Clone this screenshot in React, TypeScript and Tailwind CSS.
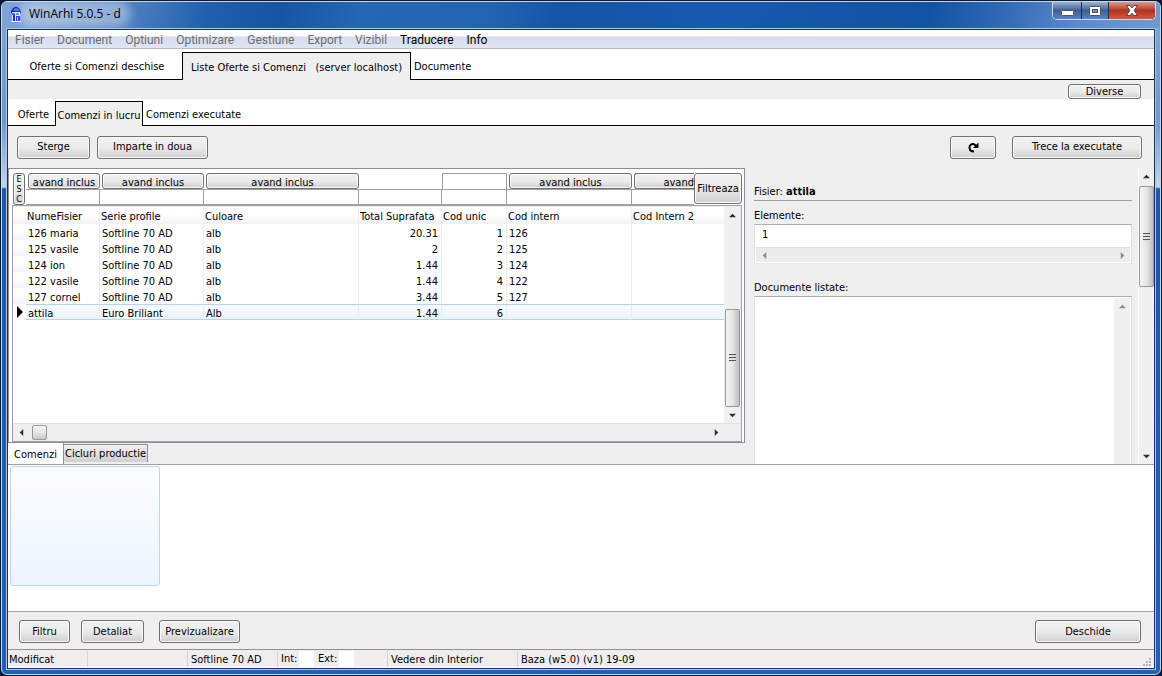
import type { ReactNode } from "react";
import clsx from "clsx";

const buttonClass =
  "rounded-[3px] border border-[#707070] bg-linear-to-b from-[#f2f2f2] via-[#ebebeb] via-50% to-[#cfcfcf] text-center whitespace-nowrap shadow-[inset_0_0_0_1px_#fafafa]";

const menus = [
  { label: "Fisier", enabled: false },
  { label: "Document", enabled: false },
  { label: "Optiuni", enabled: false },
  { label: "Optimizare", enabled: false },
  { label: "Gestiune", enabled: false },
  { label: "Export", enabled: false },
  { label: "Vizibil", enabled: false },
  { label: "Traducere", enabled: true },
  { label: "Info", enabled: true },
];

const orders = [
  { name: "126 maria", series: "Softline 70 AD", color: "alb", area: "20.31", id: 1, code: "126" },
  { name: "125 vasile", series: "Softline 70 AD", color: "alb", area: "2", id: 2, code: "125" },
  { name: "124 ion", series: "Softline 70 AD", color: "alb", area: "1.44", id: 3, code: "124" },
  { name: "122 vasile", series: "Softline 70 AD", color: "alb", area: "1.44", id: 4, code: "122" },
  { name: "127 cornel", series: "Softline 70 AD", color: "alb", area: "3.44", id: 5, code: "127" },
  { name: "attila", series: "Euro Briliant", color: "Alb", area: "1.44", id: 6, code: "" },
];

const filters = [
  { field: "NumeFisier", width: "w-[74px]", mode: true },
  { field: "Serie profile", width: "w-[104px]", mode: true },
  { field: "Culoare", width: "w-[155px]", mode: true },
  { field: "Total Suprafata", width: "w-[83px]", mode: false },
  { field: "Cod unic", width: "w-[65px]", mode: false },
  { field: "Cod intern", width: "w-[125px]", mode: true },
];

type Direction = "up" | "down" | "left" | "right";

const arrowPaths: Record<Direction, string> = {
  up: "M0 6 L4 2 L8 6 Z",
  down: "M0 2 L4 6 L8 2 Z",
  left: "M6 0 L2 4 L6 8 Z",
  right: "M2 0 L6 4 L2 8 Z",
};

function ArrowButton({ direction, label, faded }: { direction: Direction; label: string; faded?: boolean }) {
  return (
    <button type="button" aria-label={label} className="flex size-4 shrink-0 items-center justify-center">
      <svg viewBox="0 0 8 8" className={clsx("size-[7px]", faded ? "fill-[#8a8a8a]" : "fill-[#303030]")} aria-hidden>
        <path d={arrowPaths[direction]} />
      </svg>
    </button>
  );
}

function Grip() {
  return (
    <span className="flex flex-col gap-px" aria-hidden>
      <span className="h-0.5 w-[7px] border-t border-[#555] bg-[#ddd]" />
      <span className="h-0.5 w-[7px] border-t border-[#555] bg-[#ddd]" />
      <span className="h-0.5 w-[7px] border-t border-[#555] bg-[#ddd]" />
    </span>
  );
}

function VerticalThumb({ className }: { className: string }) {
  return (
    <div
      className={clsx(
        "flex w-[15px] shrink-0 items-center justify-center rounded-[2px] border border-[#979797] bg-linear-to-r from-[#f5f5f5] via-[#e6e6e6] via-50% to-[#bfbfc3]",
        className,
      )}
    >
      <Grip />
    </div>
  );
}

function AppIcon() {
  return (
    <svg viewBox="0 0 10 15" className="h-[15px] w-2.5" aria-hidden>
      <path d="M0 4 L1 3 L2 1 L4 0 H6 L8 1 L9 3 L10 4 V6 H0 Z" fill="#0b12e0" />
      <path d="M2 3 L4 1 H6 L8 3 V4 H2 Z" fill="#3f6dff" />
      <rect x="1" y="5" width="8" height="9" fill="#dfe8ff" />
      <rect x="1" y="6" width="3" height="2" fill="#3a5cff" />
      <rect x="2" y="8" width="2" height="6" fill="#1420ff" />
      <rect x="5" y="6" width="3" height="2" fill="#5a86ff" />
      <rect x="5" y="9" width="4" height="5" fill="#1a2cf0" />
      <rect x="6" y="10" width="1" height="4" fill="#9db4ff" />
      <rect x="0" y="14" width="10" height="1" fill="#fff" />
    </svg>
  );
}

function WindowControls() {
  return (
    <div className="flex h-[18px] overflow-hidden rounded-b-[5px] border border-t-0 border-[#cfdcef] bg-[#14305c]">
      <button
        type="button"
        aria-label="Minimize"
        className="mr-px flex w-7 items-center justify-center bg-linear-to-b from-[#9fb4d4] via-[#3e608f] via-50% to-[#5b84bd]"
      >
        <svg viewBox="0 0 13 6" className="mt-1 h-1.5 w-[13px]" aria-hidden>
          <rect x="0.5" y="0.5" width="12" height="5" rx="1" fill="#fff" stroke="#4b5263" />
        </svg>
      </button>
      <button
        type="button"
        aria-label="Maximize"
        className="mr-px flex w-[26px] items-center justify-center bg-linear-to-b from-[#9fb4d4] via-[#3e608f] via-50% to-[#5b84bd]"
      >
        <svg viewBox="0 0 12 10" className="h-2.5 w-3" aria-hidden>
          <rect x="0.5" y="0.5" width="11" height="9" rx="1" fill="#fff" stroke="#4b5263" />
          <rect x="3.5" y="3.5" width="5" height="3" fill="#6f8fbd" stroke="#4b5263" />
        </svg>
      </button>
      <button
        type="button"
        aria-label="Close"
        className="flex w-[46px] items-center justify-center bg-linear-to-b from-[#dc9a8e] via-[#b5301a] via-50% to-[#cf5a40]"
      >
        <svg viewBox="0 0 12 11" className="h-[11px] w-3" aria-hidden>
          <path
            d="M0.5 0.5 H4 L6 2.8 L8 0.5 H11.5 L8.2 5.5 L11.5 10.5 H8 L6 8.2 L4 10.5 H0.5 L3.8 5.5 Z"
            fill="#fff"
            stroke="#50404e"
          />
        </svg>
      </button>
    </div>
  );
}

function TitleBar() {
  return (
    <header className="flex h-[26px] shrink-0 items-start justify-between bg-[linear-gradient(100deg,#7ea6d6_0%,#6d97cd_5%,#4f80c0_11%,#1f5fae_18%,#1555a4_24%,#2667b5_31%,#2364b2_42%,#1555a6_48%,#1659b0_62%,#1353a3_80%,#2f68b5_86%,#5d8bc9_93%,#7199cf_100%)] pr-1 pl-[9px]">
      <div className="flex h-6 items-center gap-1">
        <AppIcon />
        <h1 className="rounded-full bg-white/35 px-1 font-[Open_Sans,Noto_Sans,sans-serif] text-xs leading-4 shadow-[0_0_8px_6px_rgba(255,255,255,0.35)]">
          WinArhi 5.0.5 - d
        </h1>
      </div>
      <WindowControls />
    </header>
  );
}

function MenuBar() {
  return (
    <nav
      aria-label="Meniu"
      className="flex h-[19px] shrink-0 items-center gap-[13px] border-b border-[#b6bccc] bg-linear-to-b from-white from-30% via-[#d5dcee] via-40% to-[#e1e6f6] pt-0.5 pl-[7px] font-[Roboto,Open_Sans,sans-serif] text-xs"
    >
      {menus.map((menu) => (
        <button key={menu.label} type="button" disabled={!menu.enabled} className="text-black disabled:text-[#6d6d6d]">
          {menu.label}
        </button>
      ))}
    </nav>
  );
}

function Tab({ selected, className, children }: { selected?: boolean; className: string; children: ReactNode }) {
  return (
    <button
      type="button"
      role="tab"
      aria-selected={!!selected}
      className={clsx(
        "pt-1 whitespace-pre",
        selected ? "border border-b-0 border-black bg-[#efefef]" : "border-b border-black",
        className,
      )}
    >
      {children}
    </button>
  );
}

function FilterRow() {
  return (
    <div className="flex h-9 pt-1 pl-1">
      <button
        type="button"
        aria-label="ESC"
        className={clsx(buttonClass, "mr-px flex h-8 w-3 flex-col items-center justify-center text-[9px] leading-[10px]")}
      >
        <span>E</span>
        <span>S</span>
        <span>C</span>
      </button>
      {filters.map((filter) => (
        <div key={filter.field} className={clsx("flex flex-col", filter.width)}>
          {filter.mode ? (
            <button type="button" className={clsx(buttonClass, "ml-0.5 h-4 pt-px leading-[16px]")}>
              avand inclus
            </button>
          ) : (
            <div className={clsx("h-4", filter.field === "Cod unic" && "border-x border-t border-[#a0a0a0]")} />
          )}
          <input
            type="text"
            aria-label={filter.field}
            className="h-4 w-full border-y border-r border-[#a0a0a0] bg-white px-1"
          />
        </div>
      ))}
      <div className="flex min-w-0 flex-1 flex-col">
        <button type="button" className={clsx(buttonClass, "ml-0.5 h-4 rounded-r-none border-r-0 pt-px text-right leading-[16px]")}>
          avand
        </button>
        <input type="text" aria-label="Cod Intern 2" className="h-4 w-full border-y border-[#a0a0a0] bg-white px-1" />
      </div>
      <button type="button" className={clsx(buttonClass, "h-[31px] w-12 pt-px")}>
        Filtreaza
      </button>
    </div>
  );
}

function OrdersTable() {
  const headCell = "border-r border-[#e3f1fb] pt-0.5 pl-px text-left font-normal whitespace-nowrap";
  const cell = "border-r border-[#ececec] pl-0.5 whitespace-nowrap";

  return (
    <div className="ml-[3px] flex min-h-0 flex-1 flex-col border border-[#a0a0a0] bg-[#efefef] pt-px pr-px pb-px">
      <div className="flex min-h-0 flex-1">
        <div className="min-w-0 flex-1 bg-white">
          <table className="w-full table-fixed border-separate border-spacing-0">
            <colgroup>
              <col className="w-[13px]" />
              <col className="w-[74px]" />
              <col className="w-[104px]" />
              <col className="w-[155px]" />
              <col className="w-[83px]" />
              <col className="w-[65px]" />
              <col className="w-[125px]" />
              <col />
            </colgroup>
            <thead>
              <tr className="h-[17px] bg-linear-to-b from-white from-40% to-[#f1f2f4] leading-[15px]">
                <th className="p-0" aria-label="Rand" />
                <th className={headCell}>NumeFisier</th>
                <th className={headCell}>Serie profile</th>
                <th className={headCell}>Culoare</th>
                <th className={headCell}>Total Suprafata</th>
                <th className={headCell}>Cod unic</th>
                <th className={headCell}>Cod intern</th>
                <th className="p-0 pt-0.5 pl-px text-left font-normal">Cod Intern 2</th>
              </tr>
            </thead>
            <tbody>
              {orders.map((order) => {
                const current = order.name === "attila";
                const line = current
                  ? "border-y border-y-[#b5d3f5] bg-linear-to-b from-[#fafcff] to-[#ecf4fe] pt-1"
                  : "pt-1";
                return (
                  <tr key={order.id} className={clsx("h-4", current ? "leading-[10px]" : "leading-[12px]")}>
                    <td className="p-0">
                      {current ? (
                        <svg viewBox="0 0 6 12" className="ml-1 h-3 w-1.5" aria-hidden>
                          <path d="M0 0 L6 6 L0 12 Z" />
                        </svg>
                      ) : (
                        <div className="mr-0.5 h-4 bg-linear-to-b from-white from-40% to-[#f1f2f4]" />
                      )}
                    </td>
                    <td className={clsx(cell, line)}>{order.name}</td>
                    <td className={clsx(cell, line)}>{order.series}</td>
                    <td className={clsx(cell, line)}>{order.color}</td>
                    <td className={clsx(cell, line, "pr-[3px] text-right")}>{order.area}</td>
                    <td className={clsx(cell, line, "pr-[3px] text-right")}>{order.id}</td>
                    <td className={clsx(cell, line)}>{order.code}</td>
                    <td className={clsx(line)} />
                  </tr>
                );
              })}
            </tbody>
          </table>
        </div>
        <div className="flex w-4 flex-col items-center bg-[#f0f0f0]">
          <ArrowButton direction="up" label="Sus" />
          <div className="flex-1" />
          <VerticalThumb className="h-[98px]" />
          <ArrowButton direction="down" label="Jos" />
        </div>
      </div>
      <div className="flex h-[17px] items-center border-t border-[#e0e0e0] pr-4">
        <ArrowButton direction="left" label="Stanga" />
        <div className="ml-[3px] size-[15px] rounded-[2px] border border-[#979797] bg-linear-to-b from-[#f5f5f5] via-[#e6e6e6] via-50% to-[#c8c8cc]" />
        <div className="flex-1" />
        <ArrowButton direction="right" label="Dreapta" />
      </div>
    </div>
  );
}

function DetailsPane() {
  return (
    <aside className="flex w-[409px] shrink-0">
      <div className="flex min-w-0 flex-1 flex-col pr-1.5 pl-[9px]">
        <p className="mt-4 h-[17px] border-b border-[#a0a0a0] leading-[16px]">
          Fisier: <strong>attila</strong>
        </p>
        <label htmlFor="elements" className="mt-[7px] leading-[16px]">
          Elemente:
        </label>
        <div className="h-10 border border-t-[#abadb3] border-r-[#dbdfe6] border-b-[#e3e9ef] border-l-[#e2e3ea] bg-white px-px">
          <input id="elements" readOnly value="1" className="block h-[22px] w-full px-1.5 pb-[3px]" />
          <div className="flex h-[15px] items-center justify-between border-t border-[#e0e0e0] bg-[#ececec]">
            <ArrowButton direction="left" label="Stanga" faded />
            <ArrowButton direction="right" label="Dreapta" faded />
          </div>
        </div>
        <label htmlFor="documents" className="mt-4 leading-[16px]">
          Documente listate:
        </label>
        <div className="flex min-h-0 flex-1 border border-b-0 border-t-[#abadb3] border-r-[#dbdfe6] border-l-[#e2e3ea] bg-white pt-px pr-px">
          <textarea id="documents" readOnly className="min-w-0 flex-1 resize-none" />
          <div className="w-4 bg-[#f0f0f0]">
            <ArrowButton direction="up" label="Sus" faded />
          </div>
        </div>
      </div>
      <div className="flex w-4 flex-col items-center border-l border-white bg-[#f0f0f0]">
        <ArrowButton direction="up" label="Sus" />
        <VerticalThumb className="mt-0.5 h-[101px]" />
        <div className="flex-1" />
        <ArrowButton direction="down" label="Jos" />
      </div>
    </aside>
  );
}

function StatusBar() {
  return (
    <footer className="flex h-[19px] shrink-0 items-stretch border-t border-b border-t-[#919191] border-b-white bg-[#f0eded] pt-px leading-[18px] whitespace-nowrap">
      <div className="w-20 border-r border-[#d7d3d3] pl-px">Modificat</div>
      <div className="w-[100px] border-r border-[#d7d3d3]" />
      <div className="w-[90px] border-r border-[#d7d3d3] pl-[3px]">Softline 70 AD</div>
      <div className="flex w-[110px] border-r border-[#d7d3d3] pl-[3px] leading-[16px]">
        <label htmlFor="interior" className="w-[18px]">
          Int:
        </label>
        <input id="interior" className="w-[15px] bg-white" />
        <label htmlFor="exterior" className="ml-1 w-[21px]">
          Ext:
        </label>
        <input id="exterior" className="w-[15px] bg-white" />
      </div>
      <div className="w-[130px] border-r border-[#d7d3d3] pl-[3px]">Vedere din Interior</div>
      <div className="flex-1 pl-[3px]">Baza (w5.0) (v1) 19-09</div>
      <svg viewBox="0 0 9 9" className="mr-0.5 size-[9px] self-end fill-[#b5b5b5]" aria-hidden>
        <path d="M6 0h2v2h-2z M3 3h2v2h-2z M6 3h2v2h-2z M0 6h2v2h-2z M3 6h2v2h-2z M6 6h2v2h-2z" />
      </svg>
    </footer>
  );
}

export default function App() {
  return (
    <div className="h-screen bg-[#0a1a33] p-px font-[DejaVu_Sans_Condensed,DejaVu_Sans,sans-serif] text-[11px] text-black">
      <div className="flex h-full flex-col overflow-hidden rounded-[6px] border border-[#c3d8ef] bg-[linear-gradient(to_bottom,#7ea6d6_0px,#7099cc_120px,#c3d5ec_185px,#1b59a6_187px,#1f62b5_100%)]">
        <TitleBar />
        <div className="mx-1 mb-1 flex min-h-0 flex-1 flex-col border border-[#a9c6e4]">
          <div className="flex min-h-0 flex-1 flex-col border border-[#173259] bg-[#efefef]">
            <MenuBar />

            <div role="tablist" className="flex h-[31px] shrink-0 items-stretch bg-white pt-[3px]">
              <Tab className="w-[174px] pl-1">Oferte si Comenzi deschise</Tab>
              <Tab selected className="w-[229px]">
                {"Liste Oferte si Comenzi   (server localhost)"}
              </Tab>
              <Tab className="flex-1 pl-[3px] text-left">Documente</Tab>
            </div>

            <div className="flex h-[19px] shrink-0 items-center justify-end pt-1 pr-[13px]">
              <button type="button" className={clsx(buttonClass, "h-[15px] w-[73px] leading-[13px]")}>
                Diverse
              </button>
            </div>

            <div role="tablist" className="flex h-[27px] shrink-0 items-stretch bg-white pt-0.5">
              <Tab className="w-[47px] pl-1">Oferte</Tab>
              <Tab selected className="w-[88px]">
                Comenzi in lucru
              </Tab>
              <Tab className="flex-1 pl-[3px] text-left">Comenzi executate</Tab>
            </div>

            <div className="flex h-[42px] shrink-0 items-center pr-3 pl-[9px]">
              <button type="button" className={clsx(buttonClass, "h-[23px] w-[73px] pt-px")}>
                Sterge
              </button>
              <button type="button" className={clsx(buttonClass, "ml-[7px] h-[23px] w-[111px] pt-px")}>
                Imparte in doua
              </button>
              <button
                type="button"
                aria-label="Reincarca"
                className={clsx(buttonClass, "ml-auto flex h-[23px] w-[46px] items-center justify-center")}
              >
                <svg viewBox="0 0 11 11" className="size-[11px]" aria-hidden>
                  <path d="M6 9.5 C2.5 9.5 1.5 7.5 1.5 5.5 C1.5 3 3.5 1.8 5.5 2 L8 3.6" fill="none" stroke="#000" strokeWidth="2" />
                  <path d="M10.5 0.5 V6 H5 Z" />
                </svg>
              </button>
              <button type="button" className={clsx(buttonClass, "ml-4 h-[23px] w-[130px] pt-px")}>
                Trece la executate
              </button>
            </div>

            <main className="flex min-h-0 flex-1">
              <section className="flex min-w-0 flex-1 flex-col">
                <div className="flex min-h-0 flex-1 flex-col border border-[#8c8e9a] bg-white pr-0.5">
                  <FilterRow />
                  <OrdersTable />
                </div>
                <div role="tablist" className="flex h-[21px] shrink-0 items-start">
                  <button type="button" role="tab" aria-selected className="h-full w-14 border-r border-[#8c8e9a] bg-white pt-1">
                    Comenzi
                  </button>
                  <button
                    type="button"
                    role="tab"
                    aria-selected={false}
                    className="mt-px h-[18px] w-[84px] border-t border-r border-[#8c8e9a] bg-linear-to-b from-[#f2f2f2] to-[#cfcfcf] leading-[16px] whitespace-nowrap"
                  >
                    Cicluri productie
                  </button>
                </div>
              </section>
              <DetailsPane />
            </main>

            <section className="h-[148px] shrink-0 border-y border-[#a0a0a0] bg-white pt-px pl-0.5">
              <div className="h-[120px] w-[150px] rounded-[3px] border border-[#b8d6fb] bg-linear-to-b from-[#fcfdff] to-[#edf5ff]" />
            </section>

            <div className="flex h-[37px] shrink-0 items-center pt-0.5 pr-[13px] pl-[11px]">
              <button type="button" className={clsx(buttonClass, "h-[23px] w-[51px] pt-px")}>
                Filtru
              </button>
              <button type="button" className={clsx(buttonClass, "ml-[11px] h-[23px] w-[63px] pt-px")}>
                Detaliat
              </button>
              <button type="button" className={clsx(buttonClass, "ml-[15px] h-[23px] w-[81px] pt-px")}>
                Previzualizare
              </button>
              <button type="button" className={clsx(buttonClass, "ml-auto h-[23px] w-[106px] pt-px")}>
                Deschide
              </button>
            </div>

            <StatusBar />
          </div>
        </div>
      </div>
    </div>
  );
}
